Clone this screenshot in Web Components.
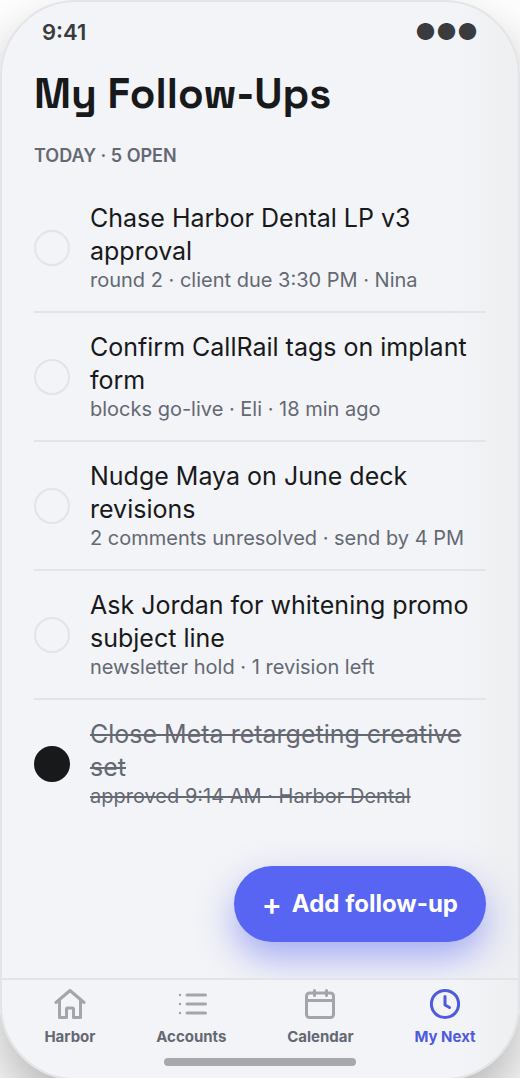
<!DOCTYPE html>
<html lang="en">
<head>
<meta charset="utf-8">
<meta name="viewport" content="width=device-width, initial-scale=1">
<title>My Follow-Ups</title>
<style>
  body { margin: 0; background: #fff; font-family: Inter, "Liberation Sans", sans-serif; color: #18191b; }
</style>
</head>
<body>
<phone-shell>
  <status-bar slot="status" time="9:41"></status-bar>
  <screen-heading>
    My Follow-Ups
    <span slot="sub">TODAY · 5 OPEN</span>
  </screen-heading>
  <follow-list>
    <follow-up note="round 2 · client due 3:30 PM · Nina">Chase Harbor Dental LP v3 approval</follow-up>
    <follow-up note="blocks go-live · Eli · 18 min ago">Confirm CallRail tags on implant form</follow-up>
    <follow-up note="2 comments unresolved · send by 4 PM">Nudge Maya on June deck revisions</follow-up>
    <follow-up note="newsletter hold · 1 revision left">Ask Jordan for whitening promo subject line</follow-up>
    <follow-up note="approved 9:14 AM · Harbor Dental" done>Close Meta retargeting creative set</follow-up>
  </follow-list>
  <add-button slot="action">Add follow-up</add-button>
  <tab-bar slot="tabs">
    <tab-item icon="home">Harbor</tab-item>
    <tab-item icon="list">Accounts</tab-item>
    <tab-item icon="calendar">Calendar</tab-item>
    <tab-item icon="clock" active>My Next</tab-item>
  </tab-bar>
</phone-shell>

<script>
class Base extends HTMLElement {
  connectedCallback() {
    if (this.shadowRoot) return;
    const t = document.createElement('template');
    t.innerHTML = this.view();
    this.attachShadow({ mode: 'open' }).append(t.content.cloneNode(true));
  }
}

customElements.define('phone-shell', class extends Base {
  view() { return `
    <style>
      :host { display: block; overflow: hidden; }
      .phone {
        box-sizing: border-box; min-height: calc(100vh - 2px); margin-bottom: -2px;
        display: flex; flex-direction: column;
        border: 2px solid #e3e4e7; border-radius: 76px; overflow: hidden;
        background: linear-gradient(to left, #eeeff1, #f3f4f7 64px);
        box-shadow: 0 30px 60px rgba(0,0,0,.3);
      }
      main { flex: 1; padding: 0 32px; }
      .action { display: flex; justify-content: flex-end; padding: 0 32px 36px; }
    </style>
    <div class="phone">
      <slot name="status"></slot>
      <main><slot></slot></main>
      <div class="action"><slot name="action"></slot></div>
      <slot name="tabs"></slot>
    </div>`; }
});

customElements.define('status-bar', class extends Base {
  view() { return `
    <style>
      :host { display: flex; justify-content: space-between; align-items: center;
        padding: 16px 40px 0; font-size: 22px; line-height: 28px; font-weight: 600; color: #3a3b3d; }
      .signal { font-size: 23px; }
    </style>
    <span>${this.getAttribute('time')}</span><span class="signal" aria-hidden="true">●●●</span>`; }
});

customElements.define('screen-heading', class extends Base {
  view() { return `
    <style>
      :host { display: block; padding: 22px 0 16px; }
      h1 { margin: 0; font: 700 42px/52px "Space Grotesk", Inter, sans-serif; }
      p { margin: 24px 0 0; font-size: 18px; line-height: 24px; font-weight: 600; color: #646873; }
    </style>
    <h1><slot></slot></h1><p><slot name="sub"></slot></p>`; }
});

customElements.define('follow-list', class extends Base {
  view() { return `
    <style>
      :host { display: block; }
      ::slotted(:not(:last-child)) { border-bottom: 2px solid #e3e4e7; }
    </style>
    <slot></slot>`; }
});

customElements.define('follow-up', class extends Base {
  view() { return `
    <style>
      :host { display: block; }
      label { display: flex; align-items: center; gap: 20px; padding: 18px 0; }
      input { appearance: none; box-sizing: border-box; flex: none; margin: 0;
        width: 36px; height: 36px; border: 2px solid #e3e4e7; border-radius: 50%; }
      input:checked { background: #18191b; border-color: #18191b; }
      .title, .note { display: block; }
      .title { font-size: 25px; line-height: 33px; }
      .note { font-size: 20px; line-height: 25px; color: #646873; }
      :host([done]) .text { color: #646873; text-decoration: line-through; }
    </style>
    <label>
      <input type="checkbox" ${this.hasAttribute('done') ? 'checked' : ''}>
      <span class="text"><span class="title"><slot></slot></span><span class="note">${this.getAttribute('note')}</span></span>
    </label>`; }
});

customElements.define('add-button', class extends Base {
  view() { return `
    <style>
      :host { display: block; }
      button { display: flex; align-items: center; gap: 10px; border: 0; border-radius: 38px;
        padding: 22px 28px; font: 700 24px/32px Inter, sans-serif; color: #fff;
        background: #5865f2; box-shadow: 0 16px 36px rgba(88,101,242,.5); }
      .plus { font-size: 30px; font-weight: 600; }
    </style>
    <button type="button"><span class="plus">+</span><span><slot></slot></span></button>`; }
});

customElements.define('tab-bar', class extends Base {
  view() { return `
    <style>
      :host { display: block; border-top: 2px solid #e3e4e7;
        background: linear-gradient(to left, #eeeff1, #f3f4f7 64px); }
      nav { display: flex; justify-content: space-around; padding: 8px 12px 10px; }
      .grip { width: 192px; height: 8px; border-radius: 4px; background: #a7a8aa; margin: 0 auto 12px; }
    </style>
    <nav><slot></slot></nav><div class="grip"></div>`; }
});

const ICONS = {
  home: '<path d="M2 14.500 16 2.500l14 12M5.500 12.500v17h7v-8.500q0-1 1-1h5q1 0 1 1v8.500h7V12.500"/>',
  list: '<path d="M12 7h18.500M12 16h18.500M12 25h18.500"/><path stroke-width="2.400" d="M5 7h.1M5 16h.1M5 25h.1"/>',
  calendar: '<rect x="2.500" y="5" width="27" height="24.500" rx="3"/><path d="M3 12.500h26M10.500 2.500v5M22.500 2.500v5"/>',
  clock: '<circle cx="16" cy="16" r="13.600"/><path d="M16 8.500V17l4.500 2.500"/>'
};

customElements.define('tab-item', class extends Base {
  view() { return `
    <style>
      :host { display: block; }
      a { display: flex; flex-direction: column; align-items: center; gap: 6px;
        text-decoration: none; color: #646873; font-size: 15px; line-height: 22px; font-weight: 700; }
      svg { width: 32px; height: 32px; fill: none; stroke: #a4a5ac; stroke-width: 3;
        stroke-linecap: round; stroke-linejoin: round; }
      :host([active]) a { color: #4f5bdc; }
      :host([active]) svg { stroke: #4f5bdc; }
    </style>
    <a href="#"><svg viewBox="0 0 32 32" aria-hidden="true">${ICONS[this.getAttribute('icon')]}</svg><span><slot></slot></span></a>`; }
});
</script>
</body>
</html>
